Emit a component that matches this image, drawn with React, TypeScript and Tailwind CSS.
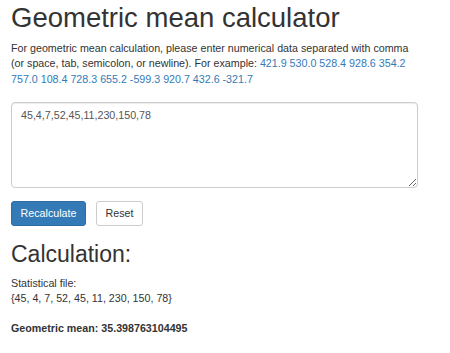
const SAMPLE = "421.9 530.0 528.4 928.6 354.2 757.0 108.4 728.3 655.2 -599.3 920.7 432.6 -321.7";

export default function App() {
  return (
    <div className="min-h-screen bg-white px-[11px] pt-[3px] text-[10.7px] leading-[15.3px] text-[#333] [font-family:'Liberation_Sans',Arial,sans-serif]">
      <h1 className="text-[27.5px] leading-[30px] font-normal">Geometric mean calculator</h1>
      <p className="mt-[8px] w-[410px]">
        For geometric mean calculation, please enter numerical data separated with comma (or space, tab, semicolon, or
        newline). For example: <span className="text-[#337ab7]">{SAMPLE}</span>
      </p>

      <textarea
        className="mt-[15px] block w-[407px] h-[86px] rounded-[4px] border border-[#ccc] px-[9px] pt-[5px] text-[10.7px] leading-[15.3px] text-[#555] shadow-[inset_0_1px_1px_rgba(0,0,0,0.075)] outline-none [font-family:'Liberation_Sans',Arial,sans-serif]"
        defaultValue="45,4,7,52,45,11,230,150,78"
      />

      <div className="mt-[13px] flex gap-[10px]">
        <button className="h-[25px] w-[75px] rounded-[3px] border border-[#2e6da4] bg-[#337ab7] text-[10.7px] text-white">
          Recalculate
        </button>
        <button className="h-[25px] w-[47px] rounded-[3px] border border-[#ccc] bg-white text-[10.7px] text-[#333]">
          Reset
        </button>
      </div>

      <h2 className="mt-[16px] text-[23px] leading-[25px] font-normal">Calculation:</h2>
      <div className="mt-[9px]">
        <div>Statistical file:</div>
        <div>{"{45, 4, 7, 52, 45, 11, 230, 150, 78}"}</div>
      </div>
      <p className="mt-[15px] font-bold">Geometric mean: 35.398763104495</p>
    </div>
  );
}
